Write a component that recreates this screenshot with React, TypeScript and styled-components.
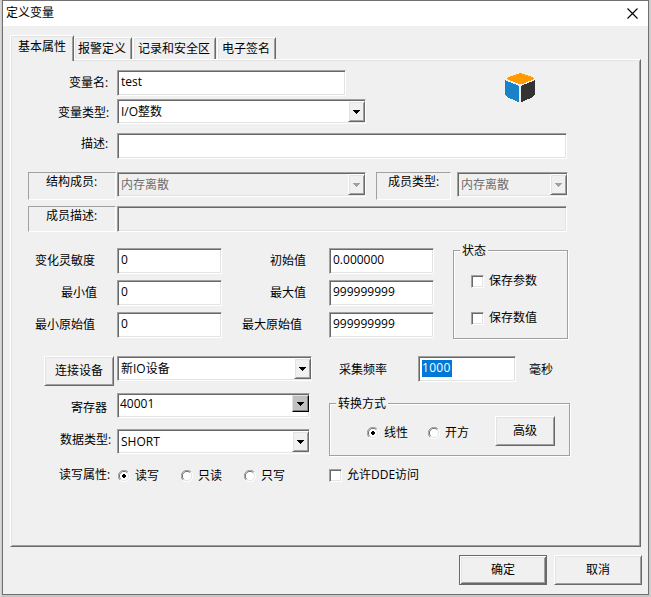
import React from "react";
import styled, { createGlobalStyle, css } from "styled-components";

const face = "#f0f0f0";
const light = "#e3e3e3";
const mid = "#a0a0a0";
const dark = "#696969";

const GlobalStyle = createGlobalStyle`
  *, *::before, *::after { box-sizing: border-box; }
  body {
    margin: 0;
    background: #cbcbcb;
    color: #000;
    font: 12px/16px "Open Sans", "Noto Sans CJK SC", sans-serif;
    overflow: hidden;
  }
`;

const sunken = css`
  border: 1px solid;
  border-color: ${mid} #fff #fff ${mid};
  box-shadow: inset 1px 1px ${dark}, inset -1px -1px ${light};
`;

const raised = css`
  border: 1px solid;
  border-color: #fff ${dark} ${dark} #fff;
  box-shadow: inset 1px 1px ${light}, inset -1px -1px ${mid};
`;

const Desktop = styled.div`
  width: 651px;
  height: 597px;
  padding-left: 2px;
  background: linear-gradient(90deg, #dedede, #c6c6c6 2px, #c6c6c6 649px, #d4d4d4);
`;

const Dialog = styled.div`
  display: flex;
  flex-direction: column;
  width: 647px;
  height: 595px;
  border: 1px solid #707070;
  background: ${face};
`;

const TitleBar = styled.header`
  display: flex;
  justify-content: space-between;
  height: 25px;
  padding: 4px 10px 0 3px;
  background: #fff;
`;

const CloseIcon = styled.svg`
  display: block;
  width: 11px;
  height: 11px;
  margin-top: 3px;
`;

const Tabs = styled.nav`
  display: flex;
  align-items: flex-end;
  height: 33px;
  padding-left: 7px;
`;

const Tab = styled.button<{ $w: number; $gap?: number; $indent: number; $active?: boolean }>`
  display: flex;
  align-items: flex-start;
  width: ${(p) => p.$w}px;
  height: ${(p) => (p.$active ? 26 : 22)}px;
  margin: 0 0 ${(p) => (p.$active ? -2 : 0)}px ${(p) => p.$gap ?? 0}px;
  padding: 3px 0 0 ${(p) => p.$indent}px;
  position: relative;
  z-index: ${(p) => (p.$active ? 1 : 0)};
  border: 1px solid;
  border-color: #fff ${dark} transparent #fff;
  border-bottom: 0;
  border-radius: 2px 1px 0 0;
  box-shadow: inset 1px 1px ${light}, inset -1px 0 ${mid};
  background: ${face};
  color: inherit;
  font: inherit;
  text-align: left;
  white-space: nowrap;
`;

const Panel = styled.main`
  width: 631px;
  height: 488px;
  margin-left: 7px;
  padding: 10px 0 0 17px;
  ${raised}
`;

const Row = styled.div<{ $h: number; $after?: number }>`
  display: flex;
  align-items: flex-start;
  height: ${(p) => p.$h}px;
  margin-bottom: ${(p) => p.$after ?? 0}px;
`;

const Columns = styled.div<{ $after?: number }>`
  display: flex;
  align-items: flex-start;
  margin-bottom: ${(p) => p.$after ?? 0}px;
`;

const Column = styled.div<{ $w?: number }>`
  width: ${(p) => (p.$w ? `${p.$w}px` : "auto")};
  flex: none;
`;

const Caption = styled.span<{ $w?: number; $indent?: number; $top: number }>`
  flex: none;
  width: ${(p) => p.$w ?? 89}px;
  padding: ${(p) => p.$top}px 0 0 ${(p) => p.$indent ?? 0}px;
  white-space: nowrap;
`;

const FramedCaption = styled.span<{ $w: number; $h: number; $indent: number; $gap: number }>`
  flex: none;
  width: ${(p) => p.$w}px;
  height: ${(p) => p.$h}px;
  margin-right: ${(p) => p.$gap}px;
  padding: 1px 0 0 ${(p) => p.$indent}px;
  border: 1px solid;
  border-color: ${mid} #fff #fff ${mid};
  white-space: nowrap;
`;

const Field = styled.div<{ $w: number; $h?: number; $disabled?: boolean; $left?: number }>`
  ${sunken}
  display: flex;
  flex: none;
  width: ${(p) => p.$w}px;
  height: ${(p) => p.$h ?? 26}px;
  padding: 3px 1px 0 ${(p) => p.$left ?? 3}px;
  background: ${(p) => (p.$disabled ? face : "#fff")};
  color: ${(p) => (p.$disabled ? "#6d6d6d" : "#000")};
  white-space: nowrap;
`;

const ComboField = styled(Field)`
  justify-content: space-between;
  padding-top: 1px;
  padding-right: 0;
`;

const ComboText = styled.span<{ $top: number }>`
  padding-top: ${(p) => p.$top}px;
`;

const DropButton = styled.span<{ $classic?: boolean }>`
  ${raised}
  display: flex;
  justify-content: center;
  align-items: center;
  width: 17px;
  height: 21px;
  background: ${face};
  ${(p) =>
    p.$classic &&
    css`
      height: 17px;
      border-color: ${light} #000 #000 ${light};
      box-shadow: inset -1px -1px #808080;
      background: #c0c0c0;
    `}
`;

const Selection = styled.span`
  width: 30px;
  height: 17px;
  background: #0078d7;
  color: #fff;
  line-height: 15px;
  letter-spacing: 0.3px;
`;

const PushButton = styled.button<{ $w: number; $primary?: boolean }>`
  ${raised}
  flex: none;
  width: ${(p) => p.$w}px;
  height: 30px;
  padding: 0;
  background: ${face};
  color: inherit;
  font: inherit;
  ${(p) =>
    p.$primary &&
    css`
      border-color: ${dark};
      box-shadow: inset 1px 1px #fff, inset -1px -1px ${dark}, inset 2px 2px ${light},
        inset -2px -2px ${mid};
    `}
`;

const Group = styled.fieldset<{ $w: number; $h: number }>`
  width: ${(p) => p.$w}px;
  height: ${(p) => p.$h}px;
  margin: 0;
  padding: 0;
  min-width: 0;
  border: 1px solid ${mid};
  box-shadow: 1px 1px #fff, inset 1px 1px #fff;
`;

const Legend = styled.div<{ $w: number }>`
  width: ${(p) => p.$w}px;
  height: 16px;
  margin: -8px 0 -1px 6px;
  padding-left: 2px;
  background: ${face};
  white-space: nowrap;
`;

const Choice = styled.label<{ $w?: number; $top?: number; $left?: number; $gap: number }>`
  display: flex;
  align-items: flex-start;
  gap: ${(p) => p.$gap}px;
  width: ${(p) => (p.$w ? `${p.$w}px` : "auto")};
  flex: none;
  margin: ${(p) => p.$top ?? 0}px 0 0 ${(p) => p.$left ?? 0}px;
  white-space: nowrap;
`;

const CheckBox = styled.span`
  ${sunken}
  width: 13px;
  height: 13px;
  margin-top: 2px;
  background: #fff;
`;

const RadioSvg = styled.svg`
  display: block;
  flex: none;
  width: 12px;
  height: 12px;
  margin-top: 2px;
`;

const Footer = styled.footer`
  display: flex;
  gap: 7px;
  padding: 8px 0 0 456px;
`;

const CubeIcon = styled.svg`
  display: block;
  width: 31px;
  height: 31px;
  margin: 2px 0 0 159px;
`;

function Arrow({ color = "#000" }: { color?: string }) {
  return (
    <svg width="7" height="4" shapeRendering="crispEdges">
      <path d="M0 0h7v1h-1v1h-1v1h-1v1h-1v-1h-1v-1h-1v-1h-1z" fill={color} />
    </svg>
  );
}

function Combo(props: {
  w: number;
  value: string;
  h?: number;
  top?: number;
  left?: number;
  disabled?: boolean;
  classic?: boolean;
}) {
  return (
    <ComboField $w={props.w} $h={props.h ?? 25} $disabled={props.disabled} $left={props.left}>
      <ComboText $top={props.top ?? 3}>{props.value}</ComboText>
      <DropButton $classic={props.classic}>
        <Arrow color={props.disabled ? mid : "#000"} />
      </DropButton>
    </ComboField>
  );
}

function Radio({ on }: { on?: boolean }) {
  return (
    <RadioSvg viewBox="0 0 12 12">
      <circle cx="6" cy="6" r="5" fill="#fff" />
      <path d="M1.9 10.1A5.5 5.5 0 0 1 10.1 1.9" fill="none" stroke={mid} />
      <path d="M10.1 1.9A5.5 5.5 0 0 1 1.9 10.1" fill="none" stroke="#fff" />
      <path d="M2.7 9.3A4.6 4.6 0 0 1 9.3 2.7" fill="none" stroke={dark} />
      <path d="M9.3 2.7A4.6 4.6 0 0 1 2.7 9.3" fill="none" stroke={light} />
      {on && <path d="M5 4h2v1h1v2h-1v1h-2v-1h-1v-2h1z" fill="#000" shapeRendering="crispEdges" />}
    </RadioSvg>
  );
}

export default function App() {
  return (
    <>
      <GlobalStyle />
      <Desktop>
        <Dialog>
          <TitleBar>
            <span>定义变量</span>
            <CloseIcon viewBox="0 0 11 11">
              <path d="M.5.5l10 10M10.5.5l-10 10" stroke="#000" strokeWidth="1.1" />
            </CloseIcon>
          </TitleBar>
          <Tabs>
            <Tab $w={64} $indent={7} $active>基本属性</Tab>
            <Tab $w={58} $indent={3}>报警定义</Tab>
            <Tab $w={83} $gap={1} $indent={4}>记录和安全区</Tab>
            <Tab $w={59} $gap={1} $indent={4}>电子签名</Tab>
          </Tabs>
          <Panel>
            <Columns>
              <Column $w={318}>
                <Row $h={26} $after={3}>
                  <Caption $indent={41} $top={5}>变量名:</Caption>
                  <Field $w={229}>test</Field>
                </Row>
                <Row $h={25} $after={9}>
                  <Caption $indent={30} $top={6}>变量类型:</Caption>
                  <Combo w={249} value="I/O整数" />
                </Row>
              </Column>
              <CubeIcon viewBox="0 0 31 31" shapeRendering="crispEdges">
                <path d="M15.5 1L26 4.4L29 6L28 7.5L20 11Q15.5 13 11 11L3 7.5L2 6L5 4.4Z" fill="#ff9a00" />
                <path d="M0 8.5Q1 8 2 9L12 13Q14 14 14 16V30Q12 29.7 9 28L3 25.5Q0 24 0 21Z" fill="#1a82c8" />
                <path d="M30 8.5Q29 8 28 9L18 13Q16 14 16 16V30Q18 29.7 21 28L27 25.5Q30 24 30 21Z" fill="#333" />
              </CubeIcon>
            </Columns>
            <Row $h={26} $after={13}>
              <Caption $indent={53} $top={3}>描述:</Caption>
              <Field $w={450} />
            </Row>
            <Row $h={28} $after={6}>
              <FramedCaption $w={88} $h={28} $indent={17} $gap={1}>结构成员:</FramedCaption>
              <Combo w={249} value="内存离散" disabled />
              <Column $w={10} />
              <FramedCaption $w={75} $h={28} $indent={11} $gap={6}>成员类型:</FramedCaption>
              <Combo w={111} value="内存离散" disabled />
            </Row>
            <Row $h={26} $after={16}>
              <FramedCaption $w={88} $h={26} $indent={17} $gap={1}>成员描述:</FramedCaption>
              <Field $w={450} $disabled />
            </Row>
            <Columns $after={17}>
              <Column $w={425}>
                <Row $h={26} $after={6}>
                  <Caption $indent={7} $top={5}>变化灵敏度</Caption>
                  <Field $w={105}>0</Field>
                  <Caption $w={107} $indent={48} $top={5}>初始值</Caption>
                  <Field $w={105}>0.000000</Field>
                </Row>
                <Row $h={26} $after={6}>
                  <Caption $indent={33} $top={5}>最小值</Caption>
                  <Field $w={105}>0</Field>
                  <Caption $w={107} $indent={48} $top={5}>最大值</Caption>
                  <Field $w={105}>999999999</Field>
                </Row>
                <Row $h={26}>
                  <Caption $indent={7} $top={5}>最小原始值</Caption>
                  <Field $w={105}>0</Field>
                  <Caption $w={107} $indent={20} $top={5}>最大原始值</Caption>
                  <Field $w={105}>999999999</Field>
                </Row>
              </Column>
              <Column>
                <Row $h={2} />
                <Group $w={115} $h={89}>
                  <Legend $w={28}>状态</Legend>
                  <Choice $left={17} $top={15} $gap={5}><CheckBox />保存参数</Choice>
                  <Choice $left={17} $top={21} $gap={5}><CheckBox />保存数值</Choice>
                </Group>
              </Column>
            </Columns>
            <Columns>
              <Column $w={301}>
                <Row $h={30} $after={7}>
                  <Column $w={16} />
                  <PushButton $w={70}>连接设备</PushButton>
                  <Column $w={3} />
                  <Combo w={195} value="新IO设备" />
                </Row>
                <Row $h={25} $after={11}>
                  <Caption $indent={43} $top={7}>寄存器</Caption>
                  <Combo w={193} value="40001" left={2} top={1} classic />
                </Row>
                <Row $h={25} $after={13}>
                  <Caption $indent={32} $top={3}>数据类型:</Caption>
                  <Combo w={193} value="SHORT" />
                </Row>
                <Row $h={16}>
                  <Caption $w={90} $indent={31} $top={0}>读写属性:</Caption>
                  <Choice $w={63} $gap={5} $top={1}><Radio on />读写</Choice>
                  <Choice $w={63} $gap={5} $top={1}><Radio />只读</Choice>
                  <Choice $gap={5} $top={1}><Radio />只写</Choice>
                </Row>
              </Column>
              <Column>
                <Row $h={26} $after={21}>
                  <Caption $indent={10} $top={6}>采集频率</Caption>
                  <Field $w={98}><Selection>1000</Selection></Field>
                  <Caption $indent={13} $top={6}>毫秒</Caption>
                </Row>
                <Group $w={241} $h={53}>
                  <Legend $w={52}>转换方式</Legend>
                  <Row $h={0}>
                    <Choice $w={61} $left={37} $top={14} $gap={5}><Radio on />线性</Choice>
                    <Choice $w={67} $top={14} $gap={5}><Radio />开方</Choice>
                    <Column>
                      <Row $h={5} />
                      <PushButton $w={60}>高级</PushButton>
                    </Column>
                  </Row>
                </Group>
                <Choice $top={11} $gap={5}><CheckBox />允许DDE访问</Choice>
              </Column>
            </Columns>
          </Panel>
          <Footer>
            <PushButton $w={88} $primary>确定</PushButton>
            <PushButton $w={88}>取消</PushButton>
          </Footer>
        </Dialog>
      </Desktop>
    </>
  );
}
